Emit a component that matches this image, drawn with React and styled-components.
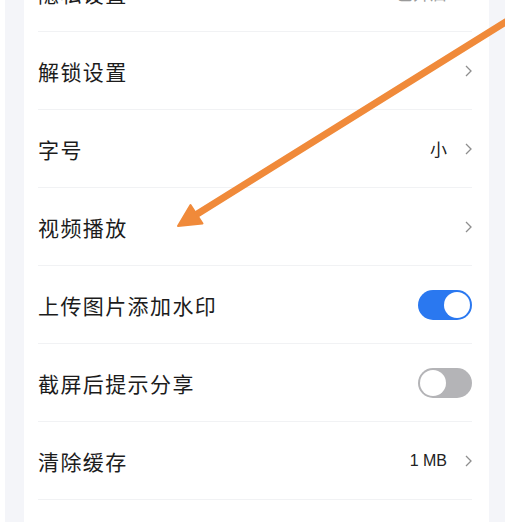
import React, { useState } from 'react'
import styled, { createGlobalStyle } from 'styled-components'

const GlobalStyle = createGlobalStyle`
  html, body {
    margin: 0;
    padding: 0;
    background: #ffffff;
  }
  body {
    font-family: "Noto Sans CJK SC", "Noto Sans", sans-serif;
  }
`

const Page = styled.div`
  position: relative;
  width: 505px;
  height: 522px;
  overflow: hidden;
  padding-left: 5px;
  box-sizing: border-box;
  background: #ffffff;
`

const Backdrop = styled.div`
  height: 100%;
  background: #f4f5f9;
  padding: 0 16px 0 19px;
  display: flex;
  flex-direction: column;
`

const Card = styled.div`
  flex: 1;
  background: #ffffff;
  margin-top: -46px;
  display: flex;
  flex-direction: column;
`

const Row = styled.div`
  height: 78px;
  flex-shrink: 0;
  margin: 0 17px 0 14px;
  display: flex;
  align-items: center;
  justify-content: space-between;
  border-bottom: 1px solid #f1f2f4;
  box-sizing: border-box;
`

const Label = styled.span`
  font-size: 21px;
  color: #1c1c1c;
  letter-spacing: 1.4px;
`

const Right = styled.div`
  display: flex;
  align-items: center;
  gap: 18px;
`

const Value = styled.span`
  font-size: ${p => (p.$latin ? '16px' : '17px')};
  color: ${p => (p.$muted ? '#9a9a9a' : '#222')};
  font-family: ${p => (p.$latin ? '"Liberation Sans", Arial, sans-serif' : 'inherit')};
`

const Chevron = () => (
  <svg width="7" height="12" viewBox="0 0 7 12">
    <polyline points="1,1 6,6 1,11" fill="none" stroke="#8e8e8e" strokeWidth="1.3" />
  </svg>
)

const Track = styled.button`
  width: 54px;
  height: 30px;
  border-radius: 15px;
  border: none;
  padding: 0;
  background: ${p => (p.$on ? '#2a78f0' : '#b4b4b7')};
  display: flex;
  align-items: center;
  justify-content: ${p => (p.$on ? 'flex-end' : 'flex-start')};
  cursor: pointer;
`

const Knob = styled.span`
  width: 26px;
  height: 26px;
  margin: 0 2px;
  border-radius: 50%;
  background: #ffffff;
`

const Toggle = ({ initial }) => {
  const [on, setOn] = useState(initial)
  return (
    <Track $on={on} onClick={() => setOn(!on)}>
      <Knob />
    </Track>
  )
}

const Arrow = styled.svg`
  position: absolute;
  left: 0;
  top: 0;
  pointer-events: none;
`

const rows = [
  { label: '隐私设置', value: '已开启', muted: true, chevron: true },
  { label: '解锁设置', chevron: true },
  { label: '字号', value: '小', chevron: true },
  { label: '视频播放', chevron: true },
  { label: '上传图片添加水印', toggle: true, on: true },
  { label: '截屏后提示分享', toggle: true, on: false },
  { label: '清除缓存', value: '1 MB', latin: true, chevron: true },
]

export default function App() {
  return (
    <>
      <GlobalStyle />
      <Page>
        <Backdrop>
          <Card>
            {rows.map(r => (
              <Row key={r.label}>
                <Label>{r.label}</Label>
                <Right>
                  {r.value && (
                    <Value $muted={r.muted} $latin={r.latin}>
                      {r.value}
                    </Value>
                  )}
                  {r.chevron && <Chevron />}
                  {r.toggle && <Toggle initial={r.on} />}
                </Right>
              </Row>
            ))}
          </Card>
        </Backdrop>
        <Arrow width="505" height="522" viewBox="0 0 505 522">
          <line x1="520" y1="13" x2="194" y2="216" stroke="#f08a3a" strokeWidth="7" strokeLinecap="round" />
          <polygon points="178,226 190.5,205 202.5,223.5" fill="#f08a3a" stroke="#f08a3a" strokeWidth="2" strokeLinejoin="round" />
        </Arrow>
      </Page>
    </>
  )
}
